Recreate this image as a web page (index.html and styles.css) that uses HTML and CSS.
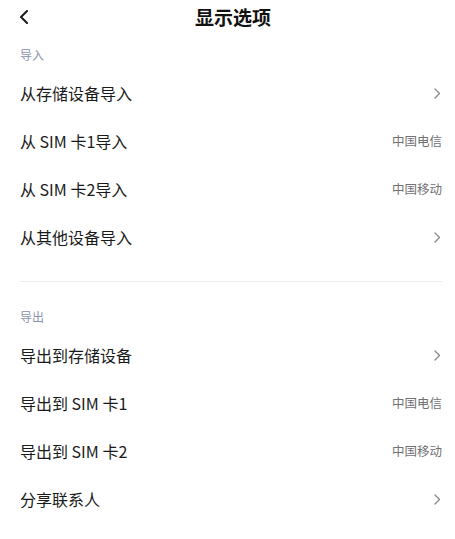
FILE: index.html
```html
<!DOCTYPE html>
<html lang="zh">
<head>
<meta charset="utf-8">
<link rel="stylesheet" href="styles.css">
</head>
<body>
<div class="page">
  <header class="header">
    <span class="back"><svg width="10" height="14" viewBox="0 0 10 14"><polyline points="8,1 2,7 8,13" fill="none" stroke="#1a1a1a" stroke-width="2" stroke-linecap="round" stroke-linejoin="round"/></svg></span>
    <h1 class="title">显示选项</h1>
  </header>

  <section class="section">
    <div class="label">导入</div>
    <div class="row"><span class="name">从存储设备导入</span><span class="chev"><svg width="7" height="11" viewBox="0 0 7 11"><polyline points="1,1 5.5,5.5 1,10" fill="none" stroke="#8a8a8a" stroke-width="1.4" stroke-linecap="round" stroke-linejoin="round"/></svg></span></div>
    <div class="row"><span class="name">从 SIM 卡1导入</span><span class="value">中国电信</span></div>
    <div class="row"><span class="name">从 SIM 卡2导入</span><span class="value">中国移动</span></div>
    <div class="row"><span class="name">从其他设备导入</span><span class="chev"><svg width="7" height="11" viewBox="0 0 7 11"><polyline points="1,1 5.5,5.5 1,10" fill="none" stroke="#8a8a8a" stroke-width="1.4" stroke-linecap="round" stroke-linejoin="round"/></svg></span></div>
  </section>

  <div class="divider"></div>

  <section class="section second">
    <div class="label">导出</div>
    <div class="row"><span class="name">导出到存储设备</span><span class="chev"><svg width="7" height="11" viewBox="0 0 7 11"><polyline points="1,1 5.5,5.5 1,10" fill="none" stroke="#8a8a8a" stroke-width="1.4" stroke-linecap="round" stroke-linejoin="round"/></svg></span></div>
    <div class="row"><span class="name">导出到 SIM 卡1</span><span class="value">中国电信</span></div>
    <div class="row"><span class="name">导出到 SIM 卡2</span><span class="value">中国移动</span></div>
    <div class="row"><span class="name">分享联系人</span><span class="chev"><svg width="7" height="11" viewBox="0 0 7 11"><polyline points="1,1 5.5,5.5 1,10" fill="none" stroke="#8a8a8a" stroke-width="1.4" stroke-linecap="round" stroke-linejoin="round"/></svg></span></div>
  </section>
</div>
</body>
</html>
```
FILE: styles.css
```css
* { box-sizing: border-box; }
html, body { margin: 0; padding: 0; background: #fff; }
body {
  font-family: "Noto Sans CJK SC", "Noto Sans", sans-serif;
  color: #1a1a1a;
}
.page { width: 455px; }
.header {
  height: 34px;
  display: grid;
  grid-template-columns: 40px 1fr 40px;
  align-items: center;
  padding-left: 19px;
}
.back { display: flex; align-items: center; height: 14px; }
.title {
  margin: 0;
  font-size: 19px;
  font-weight: 700;
  text-align: center;
  line-height: 24px;
  color: #111;
  padding-right: 8px;
}
.section { padding: 13px 13px 0 20px; }
.section.second { padding-top: 27px; }
.label {
  font-size: 12px;
  line-height: 16px;
  color: #8a93ab;
  margin-bottom: 6px;
}
.row {
  height: 48px;
  display: flex;
  align-items: center;
  justify-content: space-between;
}
.name { font-size: 16px; line-height: 20px; }
.value { font-size: 12.5px; color: #707070; line-height: 16px; }
.chev { display: flex; align-items: center; padding-right: 1px; }
.divider {
  height: 1px;
  background: #ececec;
  margin: 20px 13px 0 20px;
}
```
